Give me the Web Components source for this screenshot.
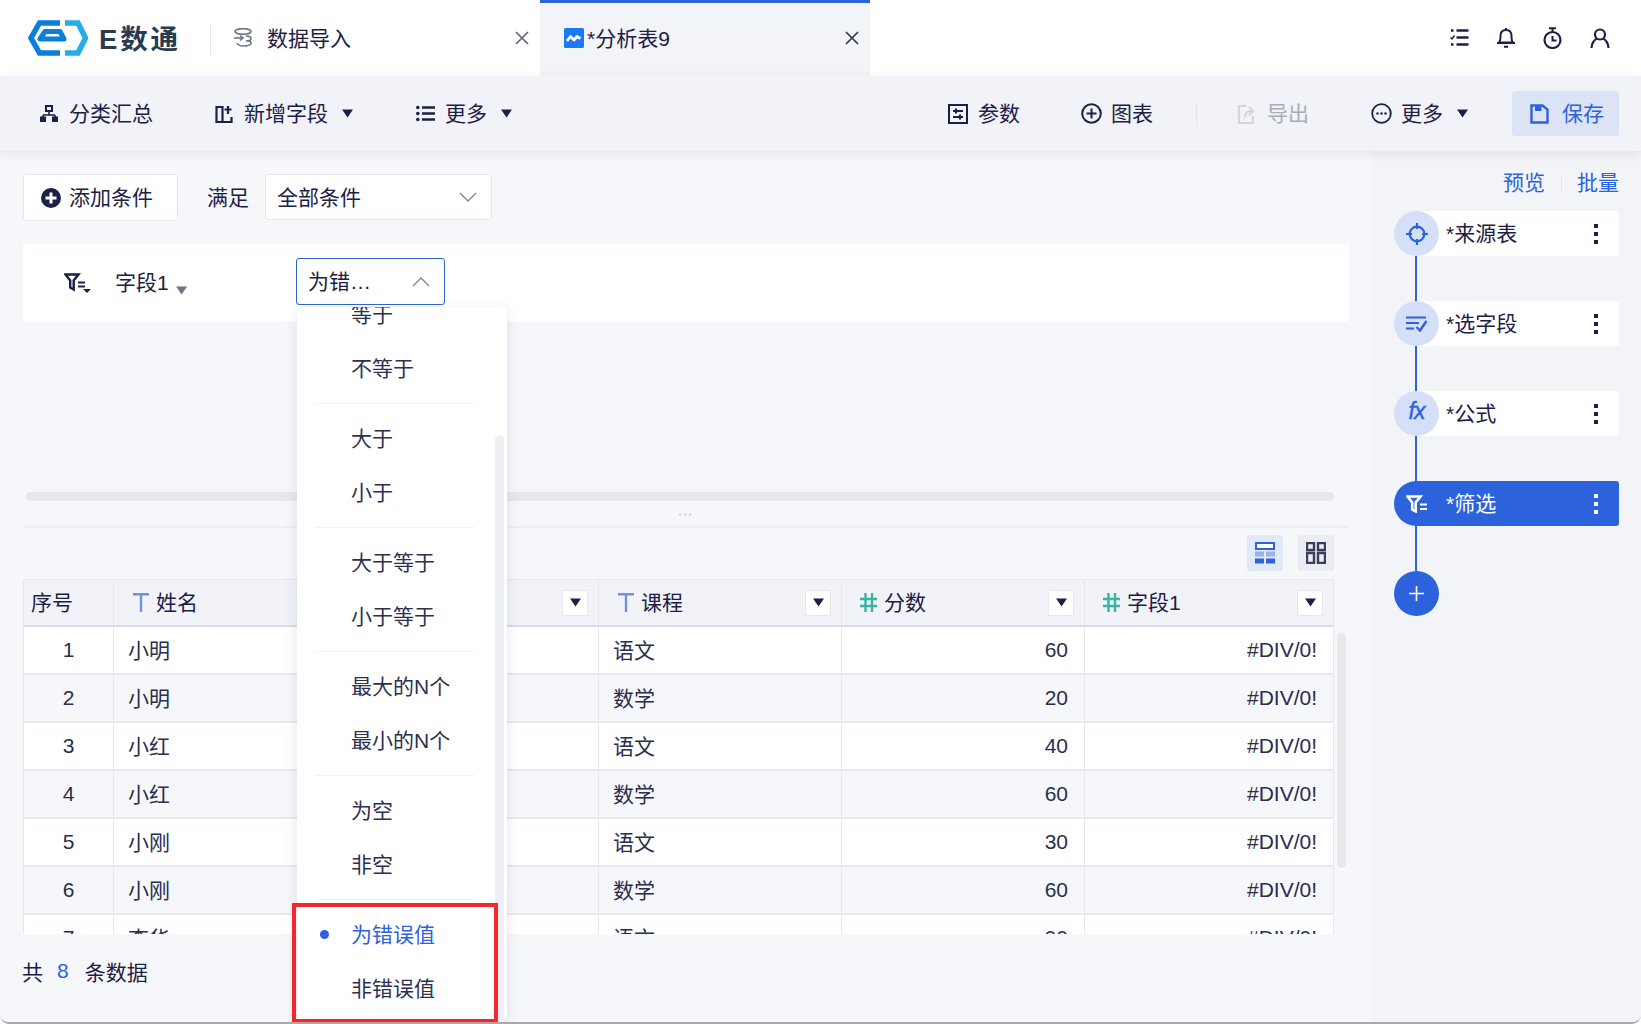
<!DOCTYPE html>
<html lang="zh-CN">
<head>
<meta charset="utf-8">
<title>E数通</title>
<style>
  html, body { margin: 0; padding: 0; background: #fff; }
  body { font-family: "Liberation Sans", "Noto Sans CJK SC", sans-serif; font-size: 21px; color: #1c2046; }
</style>
</head>
<body>
<app-shell>
  <top-bar slot="top"></top-bar>
  <tool-bar slot="tools"></tool-bar>
  <div slot="left">
    <filter-pane></filter-pane>
    <table-pane></table-pane>
  </div>
  <flow-pane slot="right">
    <flow-node icon="target" label="*来源表"></flow-node>
    <flow-node icon="pick" label="*选字段"></flow-node>
    <flow-node icon="fx" label="*公式"></flow-node>
    <flow-node icon="funnel" label="*筛选" active></flow-node>
  </flow-pane>
  <op-menu slot="over"></op-menu>
</app-shell>

<script>
const DARK = '#1c2046';
const BLUE = '#2c62dc';

// every icon is stroked/filled with currentColor unless it has its own colours
const ICONS = {
    hier: [18, 17, '<rect x="6" y="1" width="6" height="5" fill="none" stroke="currentColor" stroke-width="2"/><path d="M9 6v4M3 10h12M3 10v2M15 10v2" stroke="currentColor" stroke-width="1.6" fill="none"/><rect y="11.5" width="6" height="5.5" fill="currentColor"/><rect x="12" y="11.5" width="6" height="5.5" fill="currentColor"/>'],
    addcol: [18, 18, '<path d="M1.500 2v15h6V2zM7.500 17h9v-5M13 1v8M9.500 4.500h7" fill="none" stroke="currentColor" stroke-width="2.200"/>'],
    list: [19, 17, '<path d="M6 2.500h13M6 8.500h13M6 14.500h13" stroke="currentColor" stroke-width="2.400"/><circle cx="1.800" cy="2.500" r="1.800" fill="currentColor"/><circle cx="1.800" cy="8.500" r="1.800" fill="currentColor"/><circle cx="1.800" cy="14.500" r="1.800" fill="currentColor"/>'],
    param: [20, 20, '<rect x="1" y="1" width="18" height="18" fill="none" stroke="currentColor" stroke-width="2"/><path d="M5 7h10M5 13h10" stroke="currentColor" stroke-width="1.800"/><path d="M8 4.500v5M12 10.500v5" stroke="currentColor" stroke-width="2.200"/>'],
    chart: [21, 21, '<circle cx="10.500" cy="10.500" r="9.300" fill="none" stroke="currentColor" stroke-width="2"/><path d="M10.500 5.500v10M5.500 10.500h10" stroke="currentColor" stroke-width="2"/>'],
    export: [18, 20, '<path d="M9 2H2v17h14v-7" fill="none" stroke="#d2d5de" stroke-width="2.200"/><path d="M8 13c0-4 2-6 7-6M12 3l4 4-4 4" fill="none" stroke="#d2d5de" stroke-width="2"/>'],
    more: [21, 21, '<circle cx="10.500" cy="10.500" r="9.300" fill="none" stroke="currentColor" stroke-width="1.800"/><circle cx="6.500" cy="10.500" r="1.200" fill="currentColor"/><circle cx="10.500" cy="10.500" r="1.200" fill="currentColor"/><circle cx="14.500" cy="10.500" r="1.200" fill="currentColor"/>'],
    save: [19, 20, '<path d="M1.500 1.500h11l5 4v13h-16z" fill="none" stroke="currentColor" stroke-width="2.400"/><rect x="5" y="1.500" width="6.500" height="5.500" fill="currentColor"/>'],
    todo: [19, 19, '<path d="M6.500 2.500h12M6.500 9.500h12M6.500 16.500h12" stroke="currentColor" stroke-width="2.600"/><path d="M1 2.500h2.500M1 16.500h2.500" stroke="currentColor" stroke-width="2.600"/><path d="M.5 9.500l1.500 1.500 2.500-3.500" fill="none" stroke="currentColor" stroke-width="1.400"/>'],
    bell: [18, 21, '<path d="M2 15.500c1.500-1.500 1.500-3 1.500-6.500 0-3.500 2-6 5.500-6s5.500 2.500 5.500 6c0 3.500 0 5 1.500 6.500z" fill="none" stroke="currentColor" stroke-width="2"/><path d="M0 16h18" stroke="currentColor" stroke-width="2"/><path d="M7 19.700h4M9 1v2" stroke="currentColor" stroke-width="2"/>'],
    timer: [19, 22, '<circle cx="9.500" cy="13" r="8" fill="none" stroke="currentColor" stroke-width="2.200"/><path d="M6 1.200h7M9.500 1v4M9.500 9v4.500h4" fill="none" stroke="currentColor" stroke-width="2"/>'],
    user: [20, 20, '<circle cx="10" cy="6.500" r="5" fill="none" stroke="currentColor" stroke-width="2.200"/><path d="M1.500 20c0-5 3-8.500 5.500-9.200M18.500 20c0-5-3-8.500-5.500-9.200" fill="none" stroke="currentColor" stroke-width="2.200"/>'],
    plusdisc: [20, 20, '<circle cx="10" cy="10" r="10" fill="currentColor"/><path d="M10 4.500v11M4.500 10h11" stroke="#fff" stroke-width="3"/>'],
    funnelmore: [27, 20, '<path d="M1.500 1.500h13l-4.800 6v9l-3.500-2v-7z" fill="none" stroke="currentColor" stroke-width="2.400"/><path d="M14 9.500h7M14 13.500h7" stroke="currentColor" stroke-width="2"/><path d="M19 16h8l-4 4z" fill="currentColor"/>'],
    chevdown: [18, 10, '<path d="M1 1l8 8 8-8" fill="none" stroke="currentColor" stroke-width="1.300"/>'],
    chevup: [18, 10, '<path d="M1 9l8-8 8 8" fill="none" stroke="currentColor" stroke-width="1.300"/>'],
    caret: [11, 9, '<path d="M0 .5h11L5.500 8.500z" fill="currentColor"/>'],
    tabimport: [20, 20, '<ellipse cx="10" cy="3.500" rx="8" ry="2.800" fill="none" stroke="currentColor" stroke-width="1.600"/><path d="M1 10h9M7 7.500l3 2.500-3 2.500M13 8c3 0 5 1 5 2.500S16 13 13 13M4 15c1 2 3 3 6 3 4 0 8-1 8-3 0-1-1-2-3-2" fill="none" stroke="currentColor" stroke-width="1.600"/>'],
    tabchart: [20, 20, '<rect width="20" height="20" rx="1.500" fill="#1b7af2"/><path d="M3 13l3.500-4.500 3.500 3.500 3-3.500 3.500 2" fill="none" stroke="#fff" stroke-width="2.800" stroke-linejoin="round"/>'],
    close: [14, 14, '<path d="M1 1l12 12M13 1L1 13" stroke="currentColor" stroke-width="1.700"/>'],
    texttype: [16, 19, '<path d="M0 1.300h16M8 1.300V19" stroke="currentColor" stroke-width="2.400"/>'],
    numtype: [17, 19, '<path d="M5.500 0v19M12 0v19M0 6h17M0 13h17" stroke="currentColor" stroke-width="2.400"/>'],
    viewtable: [20, 22, '<rect x="1" y="1" width="18" height="6" fill="#fff" stroke="currentColor" stroke-width="2"/><path d="M0 9.500h9v5H0zM11 9.500h9v5h-9z" fill="currentColor" opacity=".4"/><path d="M0 16.500h9v5H0zM11 16.500h9v5h-9z" fill="currentColor"/>'],
    viewgrid: [20, 22, '<path d="M1 1h7v7H1zM12 1h7v7h-7zM1 11h7v10H1zM12 11h7v10h-7z" fill="none" stroke="currentColor" stroke-width="2.400"/>'],
    target: [22, 22, '<circle cx="11" cy="11" r="7.300" fill="none" stroke="currentColor" stroke-width="2.200"/><path d="M11 0v6M11 16v6M0 11h6M16 11h6" stroke="currentColor" stroke-width="2.200"/>'],
    pick: [21, 16, '<path d="M0 1.500h20M0 7h13M0 12.500h8" stroke="currentColor" stroke-width="2.200"/><path d="M10.500 11l3.500 3.500L20.500 5" fill="none" stroke="currentColor" stroke-width="2.400"/>'],
    funnel: [21, 18, '<path d="M1.500 1.500h13l-4.800 6v9l-3.500-2v-7z" fill="none" stroke="currentColor" stroke-width="2.600"/><path d="M14 9.500h7M14 14h7" stroke="currentColor" stroke-width="2.200"/>']
};

function icon(name) {
    const [w, h, body] = ICONS[name];
    return `<svg width="${w}" height="${h}" viewBox="0 0 ${w} ${h}" style="display:block;flex:none">${body}</svg>`;
}

class AppShell extends HTMLElement {
    constructor() {
        super();
        this.root = this.attachShadow({ mode: 'open' });
        this.root.innerHTML = `
            <style>
                :host { display: block; width: 1641px; height: 1024px; }
                #win {
                    position: relative;
                    height: 1022px;
                    border-bottom: 2px solid #a9a9a9;
                    border-radius: 0 0 9px 9px;
                    overflow: hidden;
                    display: flex;
                    flex-direction: column;
                }
                #body { flex: 1; display: flex; min-height: 0; }
                #left { width: 1371px; background: #f6f7fa; }
                #right { flex: 1; }
                #tools { position: relative; z-index: 2; }
            </style>
            <div id="win">
                <slot name="top"></slot>
                <div id="tools"><slot name="tools"></slot></div>
                <div id="body">
                    <div id="left"><slot name="left"></slot></div>
                    <div id="right"><slot name="right"></slot></div>
                </div>
                <slot name="over"></slot>
            </div>`;
    }
}

class TopBar extends HTMLElement {
    constructor() {
        super();
        this.root = this.attachShadow({ mode: 'open' });
        this.root.innerHTML = `
            <style>
                :host { display: flex; height: 76px; background: #fff; align-items: stretch; }
                #logo { width: 210px; flex: none; display: flex; align-items: center; box-sizing: border-box; padding-left: 28px; }
                #logo svg { display: block; }
                #logo span { margin-left: 11px; font-size: 27.500px; font-weight: 700; color: #2c3a4e; letter-spacing: 2.800px; margin-top: -3px; white-space: nowrap; }
                .tab { display: flex; align-items: center; box-sizing: border-box; }
                .lbl { flex: 1; margin-top: -2px; }
                #t1 { width: 330px; padding: 0 11px 0 23px; position: relative; }
                #t1::before { content: ""; position: absolute; left: 0; top: 24px; height: 31px; width: 1px; background: #e4e5ea; }
                #t1 .ic { color: #6a7286; margin-right: 14px; }
                #t2 { width: 330px; padding: 0 11px 3px 24px; background: #f2f4f8; border-top: 3px solid ${BLUE}; }
                #t2 .ic { margin-right: 3px; }
                .x { color: #5f6678; }
                #right { margin-left: auto; display: flex; align-items: center; gap: 28px; padding-right: 31px; margin-top: -1px; }
            </style>
            <div id="logo">
                <svg width="60" height="36" viewBox="0 0 60 36">
                    <path d="M32 3H11.500L3 18l8.500 15H32" fill="none" stroke="#0a7fd9" stroke-width="5.500"/>
                    <path d="M12 19h24l-4-7.500H17z" fill="none" stroke="#0a7fd9" stroke-width="5" stroke-linejoin="round"/>
                    <path d="M37 3h13l7.500 15L50 33H37" fill="none" stroke="#25ace9" stroke-width="5.500"/>
                </svg>
                <span>E数通</span>
            </div>
            <div class="tab" id="t1"><span class="ic">${icon('tabimport')}</span><span class="lbl">数据导入</span><span class="x">${icon('close')}</span></div>
            <div class="tab" id="t2"><span class="ic">${icon('tabchart')}</span><span class="lbl">*分析表9</span><span class="x" style="color:#333a50">${icon('close')}</span></div>
            <div id="right">${icon('todo')}${icon('bell')}${icon('timer')}${icon('user')}</div>`;
    }
}

class ToolBtn extends HTMLElement {
    constructor() {
        super();
        this.root = this.attachShadow({ mode: 'open' });
    }

    connectedCallback() {
        const caret = this.hasAttribute('caret') ? `<span class="caret">${icon('caret')}</span>` : '';
        this.root.innerHTML = `
            <style>
                :host { display: flex; align-items: center; flex: none; }
                .txt { margin: -4px 0 0 ${this.getAttribute('gap') || 10}px; }
                .caret { margin-left: 14px; }
            </style>
            ${icon(this.getAttribute('icon'))}<span class="txt">${this.getAttribute('label')}</span>${caret}`;
    }
}

class ToolBar extends HTMLElement {
    constructor() {
        super();
        this.root = this.attachShadow({ mode: 'open' });
        this.root.innerHTML = `
            <style>
                :host {
                    display: flex; height: 75px; align-items: center; justify-content: space-between;
                    background: #f1f3f8; box-shadow: 0 3px 10px rgba(40, 50, 90, .09);
                    padding: 0 22px 0 40px; box-sizing: border-box; position: relative;
                }
                .grp { display: flex; align-items: center; gap: 62px; }
                .sep { width: 1px; height: 24px; background: #e4e6ec; margin: 0 -22px 0 -19px; }
                .off { color: #a9adba; }
                #save {
                    width: 107px; height: 45px; background: #dce3f5; color: ${BLUE}; border-radius: 3px; box-sizing: border-box; padding-left: 3px;
                    display: flex; align-items: center; justify-content: center; margin-left: -18px;
                }
            </style>
            <div class="grp">
                <tool-btn icon="hier" label="分类汇总" gap="11"></tool-btn>
                <tool-btn icon="addcol" label="新增字段" gap="11" caret></tool-btn>
                <tool-btn icon="list" label="更多" gap="10" caret style="margin-left:1px"></tool-btn>
            </div>
            <div class="grp">
                <tool-btn icon="param" label="参数"></tool-btn>
                <tool-btn icon="chart" label="图表" gap="9" style="margin-left:-1px"></tool-btn>
                <span class="sep"></span>
                <tool-btn class="off" icon="export" label="导出" gap="12"></tool-btn>
                <tool-btn icon="more" label="更多" gap="9" caret></tool-btn>
                <div id="save"><tool-btn icon="save" label="保存" gap="13"></tool-btn></div>
            </div>`;
    }
}

class FilterPane extends HTMLElement {
    constructor() {
        super();
        this.root = this.attachShadow({ mode: 'open' });
        this.root.innerHTML = `
            <style>
                :host { display: block; padding: 23px 22px 0 23px; }
                #cond { display: flex; align-items: center; height: 47px; }
                #add {
                    width: 155px; height: 47px; box-sizing: border-box; background: #fff; border: 1px solid #e6e8ee; border-radius: 3px;
                    display: flex; align-items: center; padding-left: 17px; gap: 8px;
                }
                #add span { margin-top: -4px; }
                #meet { margin: -4px 16px 0 29px; }
                .sel {
                    box-sizing: border-box; background: #fff; border: 1px solid #e6e8ee; border-radius: 3px;
                    display: flex; align-items: center; justify-content: space-between; padding: 0 14px 0 11px;
                }
                .sel svg { color: #808596; }
                .sel span { margin-top: -3px; }
                #all { width: 227px; height: 46px; margin-bottom: 1px; }
                #row { margin-top: 23px; height: 78px; background: #fff; display: flex; align-items: flex-start; padding-left: 41px; box-sizing: border-box; }
                #fn { margin-top: 29px; }
                #fld { margin: 23px 0 0 24px; width: 61px; line-height: 32px; }
                #fcaret { margin: 42px 0 0 0; color: #6e7386; }
                #op { width: 149px; height: 47px; margin: 14px 0 0 109px; border: 1.500px solid ${BLUE}; }
            </style>
            <div id="cond">
                <div id="add">${icon('plusdisc')}<span>添加条件</span></div>
                <span id="meet">满足</span>
                <div class="sel" id="all"><span>全部条件</span>${icon('chevdown')}</div>
            </div>
            <div id="row">
                <span id="fn">${icon('funnelmore')}</span>
                <span id="fld">字段1</span>
                <span id="fcaret">${icon('caret')}</span>
                <div class="sel" id="op"><span>为错…</span>${icon('chevup')}</div>
            </div>`;
    }
}

class TablePane extends HTMLElement {
    constructor() {
        super();
        this.root = this.attachShadow({ mode: 'open' });
        this.columns = [
            { type: 'texttype', name: '姓名' },
            { type: 'texttype', name: '' },
            { type: 'texttype', name: '课程' },
            { type: 'numtype', name: '分数' },
            { type: 'numtype', name: '字段1' }
        ];
        this.rows = [
            [1, '小明', '语文', 60],
            [2, '小明', '数学', 20],
            [3, '小红', '语文', 40],
            [4, '小红', '数学', 60],
            [5, '小刚', '语文', 30],
            [6, '小刚', '数学', 60],
            [7, '李华', '语文', 90]
        ];
    }

    connectedCallback() {
        const head = this.columns.map((c) => `
            <div class="th">
                <span class="ty ${c.type}">${icon(c.type)}</span><span class="nm">${c.name}</span>
                <span class="drop">${icon('caret')}</span>
            </div>`).join('');
        const body = this.rows.map((r, i) => {
            const cl = i % 2 ? 'td alt' : 'td';
            return `<div class="${cl} c">${r[0]}</div><div class="${cl} t">${r[1]}</div><div class="${cl}"></div>
                <div class="${cl} t">${r[2]}</div><div class="${cl} n">${r[3]}</div><div class="${cl} n">#DIV/0!</div>`;
        }).join('');
        this.root.innerHTML = `
            <style>
                :host { display: block; padding: 0 22px 0 23px; color: #2a2d4d; }
                #hbar { height: 9px; margin: 170px 15px 0 3px; background: #e7e8ec; border-radius: 5px; }
                #dots { height: 25px; line-height: 10px; text-align: center; font-size: 12px; color: #a4a7b2; padding: 8px 0 0 0; box-sizing: border-box; width: 1325px; letter-spacing: 1px; }
                #line { height: 2px; background: #eceef2; }
                #views { display: flex; justify-content: flex-end; gap: 15px; margin: 7px 15px 8px 0; }
                .v { width: 36px; height: 36px; border-radius: 3px; display: flex; align-items: center; justify-content: center; }
                #v1 { background: #e1e8f7; color: ${BLUE}; }
                #v2 { background: #ecedf2; color: #3a3e5c; }
                #wrap { display: flex; height: 355px; }
                #tbl {
                    width: 1311px; flex: none; overflow: hidden; display: grid; align-content: start;
                    grid-template-columns: 91px 242px 243px 243px 243px 249px;
                    grid-template-rows: 48px; grid-auto-rows: 48px;
                }
                .th, .td { box-sizing: border-box; border-right: 1px solid #e6e8ee; display: flex; align-items: center; }
                .th { background: #f1f3f8; border-top: 1px solid #e6e8ee; border-bottom: 2px solid #d9dbe6; padding-left: 18px; color: ${DARK}; }
                .th:first-child { padding: 0 0 4px 7px; border-left: 1px solid #e6e8ee; }
                .texttype { color: #6b93e0; margin-left: 1px; }
                .numtype { color: #39b3a2; }
                .ty { margin-right: 7px; }
                .nm { margin-top: -4px; }
                .drop {
                    width: 26px; height: 26px; box-sizing: border-box; background: #fff; border: 1px solid #e6e8ee;
                    display: flex; align-items: center; justify-content: center; margin-left: auto; margin-right: 10px; color: ${DARK};
                }
                .td { height: 48px; padding: 0 15px 0 14px; background: #fff; border-bottom: 2px solid #e8e9ef; }
                .td.t { padding-bottom: 2px; }
                .td.alt { background: #f6f7fa; }
                .c { justify-content: center; padding-left: 0; padding-right: 0; border-left: 1px solid #e6e8ee; }
                .n { justify-content: flex-end; padding-right: 16px; }
                #vbar { width: 9px; height: 235px; margin: 54px 0 0 3px; background: #e8e9ed; border-radius: 5px; }
                #foot { height: 88px; display: flex; align-items: center; padding-bottom: 14px; box-sizing: border-box; color: ${DARK}; margin-left: -1px; }
                #foot b { font-weight: 400; color: ${BLUE}; margin: 0 16px 0 14px; }
            </style>
            <div id="hbar"></div>
            <div id="dots">···</div>
            <div id="line"></div>
            <div id="views">
                <div class="v" id="v1">${icon('viewtable')}</div>
                <div class="v" id="v2">${icon('viewgrid')}</div>
            </div>
            <div id="wrap">
                <div id="tbl"><div class="th">序号</div>${head}${body}</div>
                <div id="vbar"></div>
            </div>
            <div id="foot">共<b>8</b>条数据</div>`;
    }
}

class OpMenu extends HTMLElement {
    constructor() {
        super();
        this.root = this.attachShadow({ mode: 'open' });
        this.groups = [
            ['等于', '不等于'],
            ['大于', '小于'],
            ['大于等于', '小于等于'],
            ['最大的N个', '最小的N个'],
            ['为空', '非空'],
            ['为错误值', '非错误值']
        ];
        this.current = '为错误值';
    }

    connectedCallback() {
        const items = this.groups.map((g) => g.map((t) =>
            `<div class="it${t === this.current ? ' on' : ''}">${t}</div>`).join('')).join('<div class="sep"></div>');
        this.root.innerHTML = `
            <style>
                :host {
                    position: absolute; left: 297px; top: 307px; width: 210px; height: 713px; z-index: 5;
                    background: #fff; border-radius: 6px; box-shadow: 0 3px 14px rgba(40, 50, 90, .12); color: #2d3050;
                }
                #scroll { height: 100%; overflow: hidden; border-radius: 6px; }
                #list { margin-top: -20px; }
                .it { height: 54px; line-height: 56px; padding-left: 54px; position: relative; }
                .it.on { color: ${BLUE}; }
                .it.on::before {
                    content: ""; position: absolute; left: 23px; top: 23px; width: 9px; height: 9px; border-radius: 50%; background: ${BLUE};
                }
                .sep { height: 1px; background: #f0f1f4; margin: 8px 33px 7px 18px; }
                #track { position: absolute; right: 3px; top: 128px; bottom: 0; width: 9px; border-radius: 5px; background: #eeeff3; }
                #mark { position: absolute; left: -5px; top: 596px; width: 206px; height: 120px; box-sizing: border-box; border: 4px solid #f5262e; }
            </style>
            <div id="scroll"><div id="list">${items}</div></div>
            <div id="track"></div>
            <div id="mark"></div>`;
    }
}

class FlowNode extends HTMLElement {
    constructor() {
        super();
        this.root = this.attachShadow({ mode: 'open' });
    }

    connectedCallback() {
        const name = this.getAttribute('icon');
        const mark = name === 'fx' ? '<span class="fx">fx</span>' : icon(name);
        this.root.innerHTML = `
            <style>
                :host { display: grid; height: 45px; color: ${DARK}; }
                :host([active]) { color: #fff; }
                .card {
                    grid-area: 1 / 1; margin-left: 22px; background: #fff; border-radius: 3px;
                    display: flex; align-items: center; justify-content: space-between; padding: 0 21px 0 30px;
                }
                .card .lb { margin-top: -4px; }
                :host([active]) .card { background: ${BLUE}; }
                .dot {
                    grid-area: 1 / 1; width: 45px; height: 45px; border-radius: 50%; background: #d5dff7; color: ${BLUE};
                    display: flex; align-items: center; justify-content: center; z-index: 1;
                }
                :host([active]) .dot { background: ${BLUE}; color: #fff; }
                .fx { font: italic 400 23px "Liberation Sans", sans-serif; margin-top: -4px; letter-spacing: -1px; -webkit-text-stroke: .4px currentColor; }
                .menu { display: flex; flex-direction: column; gap: 4px; }
                .menu i { display: block; width: 4px; height: 4px; background: currentColor; }
            </style>
            <div class="card"><span class="lb">${this.getAttribute('label')}</span><span class="menu"><i></i><i></i><i></i></span></div>
            <div class="dot">${mark}</div>`;
    }
}

class FlowPane extends HTMLElement {
    constructor() {
        super();
        this.root = this.attachShadow({ mode: 'open' });
        this.root.innerHTML = `
            <style>
                :host { display: block; height: 100%; background: #f2f4f8; padding: 16px 22px 0 23px; box-sizing: border-box; }
                #links { display: flex; justify-content: flex-end; align-items: center; height: 28px; color: ${BLUE}; margin-bottom: 16px; }
                #links i { width: 1px; height: 15px; background: #e2e4ea; margin: 4px 15px 0 16px; }
                #flow { display: flex; flex-direction: column; }
                ::slotted(flow-node:not(:first-child)) { margin-top: 45px; }
                #tail { margin-left: 21px; width: 2px; height: 45px; background: ${BLUE}; }
                #add {
                    width: 45px; height: 45px; border-radius: 50%; background: ${BLUE}; color: #fff;
                    display: flex; align-items: center; justify-content: center;
                }
                #stem { position: absolute; margin-left: 21px; width: 2px; height: 270px; background: ${BLUE}; }
            </style>
            <div id="links"><span>预览</span><i></i><span>批量</span></div>
            <div id="flow">
                <div id="stem" style="margin-top:45px"></div>
                <slot></slot>
                <div id="tail"></div>
                <div id="add"><svg width="15" height="15" viewBox="0 0 15 15"><path d="M7.500 0v15M0 7.500h15" stroke="#fff" stroke-width="1.600"/></svg></div>
            </div>`;
    }
}

customElements.define('app-shell', AppShell);
customElements.define('top-bar', TopBar);
customElements.define('tool-btn', ToolBtn);
customElements.define('tool-bar', ToolBar);
customElements.define('filter-pane', FilterPane);
customElements.define('table-pane', TablePane);
customElements.define('op-menu', OpMenu);
customElements.define('flow-node', FlowNode);
customElements.define('flow-pane', FlowPane);
</script>
</body>
</html>
